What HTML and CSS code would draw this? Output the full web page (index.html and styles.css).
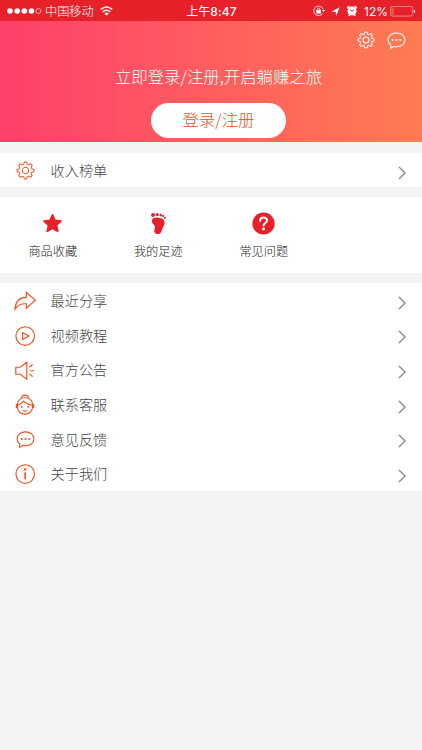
FILE: index.html
```html
<!DOCTYPE html>
<html lang="zh-CN">
<head>
<meta charset="utf-8">
<title>我的</title>
<link rel="stylesheet" href="styles.css">
</head>
<body>
<svg class="defs" aria-hidden="true">
  <defs>
    <path id="tooth" d="M-3.06-7.39Q-2.1-7.8-2-8.5L-1.8-9.8Q-1.7-10.7-.9-10.7H.9Q1.7-10.7 1.8-9.8L2-8.5Q2.1-7.8 3.06-7.39"/>
    <symbol id="gear" viewBox="-12 -12 24 24">
      <use href="#tooth"/><use href="#tooth" transform="rotate(45)"/><use href="#tooth" transform="rotate(90)"/><use href="#tooth" transform="rotate(135)"/><use href="#tooth" transform="rotate(180)"/><use href="#tooth" transform="rotate(225)"/><use href="#tooth" transform="rotate(270)"/><use href="#tooth" transform="rotate(315)"/>
      <circle r="4"/>
    </symbol>
    <symbol id="chat" viewBox="0 0 20 20">
      <path d="M4 14.8C2 13.4 1.1 11.6 1.1 9.3c0-4.3 3.9-7.3 8.9-7.3s8.9 3 8.9 7.3-3.9 7.3-8.9 7.3c-1 0-2-.1-2.9-.4L3.8 18.3z"/>
      <g class="solid"><circle cx="6" cy="9.4" r="1.1"/><circle cx="10" cy="9.4" r="1.1"/><circle cx="14" cy="9.4" r="1.1"/></g>
    </symbol>
    <symbol id="chevron" viewBox="0 0 8 14"><path d="M1 1l6 6-6 6"/></symbol>
  </defs>
</svg>

<div class="status">
  <div class="carrier">
    <svg class="signal" viewBox="0 0 35 6"><g class="solid"><circle cx="3" cy="3" r="2.8"/><circle cx="10.2" cy="3" r="2.8"/><circle cx="17.3" cy="3" r="2.8"/><circle cx="24.4" cy="3" r="2.8"/></g><circle cx="31.4" cy="3" r="2.5" stroke-width=".6"/></svg>
    <span>中国移动</span>
    <svg class="wifi" viewBox="0 0 13 10"><path d="M.8 3.5q5.7-5 11.4 0M2.8 5.8q3.7-3.1 7.4 0" stroke-width="1.6"/><path class="solid" d="M4.4 7.4q2.1-1.6 4.2 0L6.5 9.7z"/></svg>
  </div>
  <div class="time">上午<b>8:47</b></div>
  <div class="indicators">
    <svg class="lock" viewBox="0 0 12 12"><path d="M9.7 8.4A4.8 4.8 0 1 1 10.2 4.5" stroke-width=".8"/><path class="solid" d="M9 5h3l-1.5 2z"/><rect class="solid" x="3.3" y="5" width="4.6" height="3.6"/><path d="M4.3 5V4q1.3-2 2.6 0v1" stroke-width=".9"/></svg>
    <svg class="arrow" viewBox="0 0 10 10"><path class="solid" d="M.3 5.2L9.7.3 5.7 9.7 5.1 5.2z"/></svg>
    <svg class="alarm" viewBox="0 0 12 12"><circle class="solid" cx="6" cy="6" r="4.5"/><path d="M1 3.2L3.3 1.1M8.7 1.1L11 3.2M2.7 10.7l1-1.1M9.3 10.7l-1-1.1" stroke-width="1.4"/><path class="hands" d="M3.8 4.5L6 6.3 8.2 4.5"/></svg>
    <span class="percent">12%</span>
    <svg class="battery" viewBox="0 0 26 11"><rect x=".5" y=".5" width="22" height="9.6" rx="1.8" stroke-width=".6" opacity=".75"/><rect class="charge" x="1.3" y="1.3" width="2.7" height="8" rx=".6"/><path class="solid" d="M23.8 3.5q1.3.4 1.3 1.8t-1.3 1.8z"/></svg>
  </div>
</div>

<header class="hero">
  <div class="tools">
    <svg class="tool-gear"><use href="#gear"/></svg>
    <svg class="tool-chat"><use href="#chat"/></svg>
  </div>
  <p class="slogan">立即登录/注册,开启躺赚之旅</p>
  <a class="login">登录/注册</a>
</header>

<main>
  <section class="list single">
    <div class="row"><svg class="icon gear"><use href="#gear"/></svg><span>收入榜单</span><svg class="chevron"><use href="#chevron"/></svg></div>
  </section>

  <section class="shortcuts">
    <div class="shortcut">
      <svg viewBox="0 0 24 24"><path d="M12 3l2.6 5.8 6.3.7-4.7 4.3 1.3 6.3L12 17l-5.5 3.1 1.3-6.3-4.7-4.3 6.3-.7z" stroke="currentColor" stroke-width="1.8" stroke-linejoin="round"/></svg>
      <span>商品收藏</span>
    </div>
    <div class="shortcut">
      <svg viewBox="0 0 24 24"><circle cx="6.3" cy="3.2" r="2.1"/><circle cx="10.7" cy="2.7" r="1.6"/><circle cx="14.3" cy="3.2" r="1.4"/><circle cx="16.9" cy="4.3" r="1.15"/><circle cx="18.7" cy="6" r="1"/><path d="M5.2 9.2C5.5 6 8.5 5.7 11.7 5.9c3.9.3 6.6 1.7 6.6 5.2 0 3.2-1.8 4.3-2.6 7.1-.7 2.6-1.4 4.8-4.4 4.8-3 0-4.2-2.4-3.6-4.8.6-2.6 1.2-3.6-.5-5-1.4-1-2.2-1.9-2-4z"/></svg>
      <span>我的足迹</span>
    </div>
    <div class="shortcut">
      <svg viewBox="0 0 24 24"><circle cx="12" cy="12" r="11.6"/><path d="M8.4 9.3c0-4.8 7.3-4.8 7.3-.4 0 2.6-3.6 2.7-3.6 5.3" fill="none" stroke="#fff" stroke-width="2.1" stroke-linecap="round"/><circle cx="12.1" cy="17.8" r="1.5" fill="#fff"/></svg>
      <span>常见问题</span>
    </div>
  </section>

  <section class="list">
    <div class="row"><svg class="icon" viewBox="0 0 22 22"><path d="M12.3 2.5L21.4 10.2l-9.1 8.1V13.8C7.4 13.4 3.7 15 1 19.2 1.4 11.8 5.7 7.4 12.3 7.1z"/></svg><span>最近分享</span><svg class="chevron"><use href="#chevron"/></svg></div>
    <div class="row"><svg class="icon" viewBox="0 0 22 22"><circle cx="11.2" cy="11" r="9.3"/><path d="M8.6 7.7v6.8l6.3-3.4z"/></svg><span>视频教程</span><svg class="chevron"><use href="#chevron"/></svg></div>
    <div class="row"><svg class="icon" viewBox="0 0 22 22"><path d="M1.8 8.2h4.4l6.6-5v17l-6.6-5H1.8zM15.8 11.7H20M15.4 8.2L18.6 5.5M15.4 14.9l3.2 2.7"/></svg><span>官方公告</span><svg class="chevron"><use href="#chevron"/></svg></div>
    <div class="row"><svg class="icon" viewBox="0 0 22 22"><path d="M3.5 10.2C3.4 1.6 18.6 1.6 18.5 10.2V13c0 9.4-15 9.4-15 0zM7.8 4.3c-1.5-4.2 7.9-4.2 6.4 0M3.7 11.2c3-.7 4.7-2.2 5.7-4 2.3 2.3 5 3.6 8.9 4M9 16.5q2 1.4 4 0"/><path d="M2.8 10v4M19.2 10v4" stroke-width="2"/><g class="solid"><circle cx="7.7" cy="12.9" r=".9"/><circle cx="14.3" cy="12.9" r=".9"/></g></svg><span>联系客服</span><svg class="chevron"><use href="#chevron"/></svg></div>
    <div class="row"><svg class="icon chat"><use href="#chat"/></svg><span>意见反馈</span><svg class="chevron"><use href="#chevron"/></svg></div>
    <div class="row"><svg class="icon" viewBox="0 0 22 22"><circle cx="11.2" cy="11" r="9.3"/><path d="M11.2 9.3v7" stroke-width="1.6"/><circle class="solid" cx="11.2" cy="6.5" r="1.2"/></svg><span>关于我们</span><svg class="chevron"><use href="#chevron"/></svg></div>
  </section>
</main>
</body>
</html>
```
FILE: styles.css
```css
* { box-sizing: border-box; }
body {
  margin: 0;
  min-height: 750px;
  background: #f4f4f4;
  color: #444;
  font-family: "Noto Sans CJK SC", sans-serif;
  font-weight: 300;
}
svg { display: block; flex: none; fill: none; stroke: currentColor; }
.defs { width: 0; height: 0; position: absolute; }
.solid { fill: currentColor; stroke: none; }

.status {
  display: grid;
  grid-template-columns: 1fr auto 1fr;
  align-items: center;
  height: 21px;
  padding: 0 6px 0 7px;
  background: #e6212a;
  color: #fff;
  font-size: 12px;
  line-height: 21px;
}
.carrier, .indicators { display: flex; align-items: center; }
.signal { width: 35px; height: 6px; margin-right: 3px; }
.carrier span { font-size: 12.2px; }
.wifi { width: 13px; height: 10px; margin-left: 6px; }
.time { font-size: 12px; font-weight: 400; }
.time b { font-family: Inter, sans-serif; font-weight: 500; letter-spacing: .1px; }
.indicators { justify-content: flex-end; }
.lock { width: 12px; height: 12px; margin-right: 6px; }
.arrow { width: 9px; height: 9px; margin-right: 6px; }
.alarm { width: 12px; height: 12px; margin-right: 6px; }
.hands { stroke: #e6212a; stroke-width: 1; }
.percent { margin-right: 2px; font-family: Inter, sans-serif; font-size: 12px; font-weight: 400; letter-spacing: 0; }
.battery { width: 26px; height: 11px; }
.charge { fill: #ff4a42; stroke: none; }

.hero {
  display: flex;
  flex-direction: column;
  align-items: center;
  height: 121px;
  padding-top: 9px;
  background: linear-gradient(90deg, #ff3f6c, #ff7c52);
  color: #fff;
}
.tools { display: flex; align-self: flex-end; align-items: center; gap: 12px; height: 20px; margin-right: 16px; }
.tool-gear { width: 18px; height: 18px; stroke-width: 1.4; }
.tool-chat { width: 19px; height: 19px; stroke-width: 1.1; }
.slogan { margin: 13px 0 0 15px; font-size: 16.4px; line-height: 26px; white-space: nowrap; }
.login {
  width: 135px;
  height: 35px;
  margin: 14px 0 0 15px;
  border-radius: 18px;
  background: #fff;
  color: #e94f22;
  font-size: 16.4px;
  line-height: 32px;
  text-align: center;
}

main { display: grid; gap: 10px; padding-top: 11px; }
.list { background: #fff; }
.row { display: flex; align-items: center; height: 34.6px; padding: 0 16px 0 14px; font-size: 14.2px; }
.single .row { height: 34px; }
.row span { flex: 1; margin: 0 0 0 14.5px; line-height: 20px; }
.single .row span { margin-bottom: 1px; }
.icon { width: 22px; height: 22px; margin-top: 1.5px; color: #f0501f; stroke-width: 1.15; }
.icon.gear { width: 19px; height: 19px; margin: 1px 1.5px 0; stroke-width: 1.3; }
.icon.chat { width: 19px; height: 19px; margin: 1.5px 1.5px 0; }
.chevron { width: 8px; height: 14px; margin-top: 5px; color: #888; stroke-width: 1.4; }

.shortcuts { display: grid; grid-template-columns: repeat(4, 105.5px); height: 76px; padding-top: 15px; background: #fff; }
.shortcut { display: flex; flex-direction: column; align-items: center; gap: 6px; color: #222; font-size: 12.2px; line-height: 20px; }
.shortcut svg { width: 23px; height: 23px; color: #e6212a; fill: currentColor; stroke: none; }
```
